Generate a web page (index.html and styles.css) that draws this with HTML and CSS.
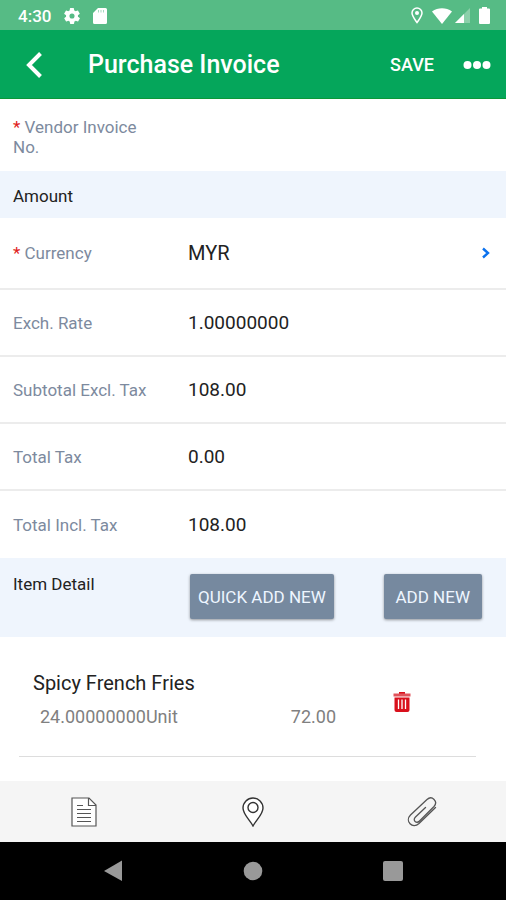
FILE: index.html
```html
<!DOCTYPE html>
<html lang="en">
<head>
<meta charset="utf-8">
<meta name="viewport" content="width=device-width, initial-scale=1">
<title>Purchase Invoice</title>
<link rel="stylesheet" href="styles.css">
</head>
<body>
<div class="status-bar">
  <span class="clock">4:30</span>
  <svg width="16" height="16" viewBox="2 2 20 20" aria-hidden="true"><path fill="#fff" d="M19.4 13a7.500 7.500 0 0 0 0-2l2.100-1.600a.5.5 0 0 0 .1-.6l-2-3.500a.5.5 0 0 0-.6-.2l-2.500 1a7.300 7.300 0 0 0-1.700-1l-.4-2.600a.5.5 0 0 0-.5-.4h-4a.5.5 0 0 0-.5.400L9.100 5.100a7.700 7.700 0 0 0-1.700 1l-2.500-1a.5.5 0 0 0-.6.200l-2 3.500a.5.5 0 0 0 .1.600L4.600 11a8 8 0 0 0 0 2l-2.100 1.600a.5.5 0 0 0-.1.600l2 3.500c.1.200.4.300.6.200l2.500-1a7.300 7.300 0 0 0 1.700 1l.4 2.600c0 .2.200.4.500.4h4c.2 0 .5-.2.500-.4l.4-2.600a7.700 7.700 0 0 0 1.700-1l2.500 1c.2.100.5 0 .6-.2l2-3.500a.5.5 0 0 0-.1-.6zM12 15.200a3.200 3.200 0 1 1 0-6.400 3.200 3.200 0 0 1 0 6.400z"/></svg>
  <svg width="14" height="16" viewBox="0 0 14 16" aria-hidden="true"><path fill="#fff" d="M5 0h7.500A1.500 1.500 0 0 1 14 1.500v13a1.500 1.500 0 0 1-1.500 1.500h-11A1.500 1.500 0 0 1 0 14.500V5z"/><path stroke="#a5dabf" stroke-width="1" d="M5.500 2v2.500M8 2v2.500M10.500 2v2.500"/></svg>
  <span class="status-right">
    <svg width="12" height="17" viewBox="0 0 12 17" aria-hidden="true"><path fill="none" stroke="#fff" stroke-width="1.500" d="M6 15.500C3.500 12 1 9 1 6a5 5 0 0 1 10 0c0 3-2.500 6-5 9.500z"/><circle cx="6" cy="6" r="2" fill="#fff"/></svg>
    <svg class="spaced" width="20" height="16" viewBox="0 0 20 16" aria-hidden="true"><path fill="#fff" d="M0 3.500C6-.7 14-.7 20 3.500L10 16z"/></svg>
    <svg width="15" height="15" viewBox="0 0 15 15" aria-hidden="true"><path fill="#8bd0aa" d="M15 0v15H0z"/><path fill="#fff" d="M9 6v9H0z"/></svg>
    <svg class="spaced" width="11" height="17" viewBox="0 0 11 17" aria-hidden="true"><path fill="#fff" d="M3 0h5v1.500h2a1 1 0 0 1 1 1V16a1 1 0 0 1-1 1H1a1 1 0 0 1-1-1V2.500a1 1 0 0 1 1-1h2z"/></svg>
  </span>
</div>

<header class="app-bar">
  <button class="back" type="button" aria-label="Back"><svg width="18" height="28" viewBox="0 0 18 28"><path fill="none" stroke="#fff" stroke-width="4" d="M16.500 2.500L5 14l11.500 11.500"/></svg></button>
  <h1 class="title">Purchase Invoice</h1>
  <button class="save" type="button">SAVE</button>
  <button type="button" aria-label="More"><svg width="28" height="10" viewBox="0 0 28 10"><g fill="#fff"><circle cx="4.500" cy="5" r="4"/><circle cx="14" cy="5" r="4"/><circle cx="23.500" cy="5" r="4"/></g></svg></button>
</header>

<main class="content">
  <form class="form">
    <div class="row row-first">
      <label for="vendor"><span class="required">*</span> Vendor Invoice No.</label>
      <input id="vendor" type="text">
    </div>
    <h2 class="section">Amount</h2>
    <div class="row">
      <label for="currency"><span class="required">*</span> Currency</label>
      <button id="currency" class="picker" type="button">MYR<svg width="8" height="12" viewBox="0 0 8 12" aria-hidden="true"><path fill="none" stroke="#0b72ee" stroke-width="2.400" d="M1 1.500L6 6 1 10.500"/></svg></button>
    </div>
    <div class="row">
      <label for="rate">Exch. Rate</label>
      <input id="rate" type="text" value="1.00000000">
    </div>
    <div class="row">
      <label for="subtotal">Subtotal Excl. Tax</label>
      <input id="subtotal" type="text" value="108.00">
    </div>
    <div class="row">
      <label for="tax">Total Tax</label>
      <input id="tax" type="text" value="0.00">
    </div>
    <div class="row row-last">
      <label for="total">Total Incl. Tax</label>
      <input id="total" type="text" value="108.00">
    </div>
  </form>

  <div class="detail-bar">
    <h2>Item Detail</h2>
    <button class="raised" type="button">QUICK ADD NEW</button>
    <button class="raised add" type="button">ADD NEW</button>
  </div>

  <ul class="items">
    <li class="item">
      <div>
        <h3 class="item-name">Spicy French Fries</h3>
        <p class="item-line"><span>24.00000000Unit</span><span>72.00</span></p>
      </div>
      <button class="delete" type="button" aria-label="Delete"><svg width="18" height="20" viewBox="0 0 18 20"><path fill="#d9101c" d="M6 0h6v2H6z"/><path fill="#e0525a" d="M.5 1.500h17v3H.5z"/><path fill="#d9101c" d="M1.500 5.500h15V18a2 2 0 0 1-2 2h-11a2 2 0 0 1-2-2z"/><path stroke="#fff" stroke-width="1.300" d="M5.500 7.500v9.500M9 7.500v9.500M12.500 7.500v9.500"/></svg></button>
    </li>
  </ul>
</main>

<nav class="tabs">
  <button class="tab" type="button" aria-label="Notes"><svg width="26" height="30" viewBox="0 0 26 30"><g fill="none" stroke="#555" stroke-width="1.200"><path fill="#fff" d="M1 1h17l7 7v21H1z"/><path d="M17.500 1v7.500H25"/><path d="M6 8.500h6M6 12.500h14M6 16.500h14M6 20.500h14M6 24.500h14"/></g></svg></button>
  <button class="tab" type="button" aria-label="Location"><svg width="22" height="30" viewBox="0 0 22 30"><g fill="none" stroke="#333" stroke-width="1.400"><path fill="#fff" d="M11 29C8 23 1 17.500 1 11a10 10 0 0 1 20 0c0 6.500-7 12-10 18z"/><circle cx="11" cy="10.500" r="5"/></g></svg></button>
  <button class="tab" type="button" aria-label="Attachments"><svg width="30" height="32" viewBox="0 0 30 32"><path fill="none" stroke="#555" stroke-width="1.300" stroke-linecap="round" stroke-linejoin="round" d="M18.500 11.500L8.500 21c-3.500 3.500 1 7 4 4L27 10.500c4.500-5-2-11.500-7-7L3.500 19c-6 6 2 14.500 8.500 8.500l16.500-16"/></svg></button>
</nav>

<div class="system-nav">
  <button type="button" aria-label="System back"><svg width="20" height="22" viewBox="0 0 20 22"><path fill="#999" d="M19 .5v20.500L1 11z"/></svg></button>
  <button type="button" aria-label="Home"><svg width="20" height="20" viewBox="0 0 20 20"><circle cx="10" cy="10" r="9.300" fill="#999"/></svg></button>
  <button type="button" aria-label="Recent apps"><svg width="20" height="20" viewBox="0 0 20 20"><rect width="20" height="20" rx="2" fill="#999"/></svg></button>
</div>
</body>
</html>
```
FILE: styles.css
```css
* {
  box-sizing: border-box;
}

body {
  margin: 0;
  min-height: 100vh;
  display: flex;
  flex-direction: column;
  background: #fff;
  color: #222;
  font-family: Roboto, "Liberation Sans", sans-serif;
  font-size: 17px;
  line-height: 20px;
}

button,
input {
  margin: 0;
  padding: 0;
  border: 0;
  background: none;
  color: inherit;
  font: inherit;
}

h1,
h2,
h3,
p,
ul {
  margin: 0;
  padding: 0;
  font-size: inherit;
  font-weight: 400;
  list-style: none;
}

svg {
  display: block;
  flex: none;
}

.status-bar {
  display: flex;
  align-items: center;
  gap: 13px;
  height: 30px;
  padding: 1px 16px 0 18px;
  background: #56bb85;
  color: #fff;
}

.clock {
  font-weight: 500;
}

.status-right {
  display: flex;
  align-items: center;
  gap: 3px;
  margin-left: auto;
}

.spaced {
  margin-left: 6px;
}

.app-bar {
  display: flex;
  align-items: center;
  height: 69px;
  padding: 2px 15px 0 24px;
  background: #05a65b;
  border-bottom: 1px solid #0b9838;
  color: #fff;
}

.back {
  margin-right: 46px;
}

.title {
  flex: 1;
  font-size: 25px;
  font-weight: 500;
  line-height: 32px;
}

.save {
  margin-right: 29px;
  font-size: 18px;
  font-weight: 500;
}

.content {
  flex: 1;
}

.row {
  display: grid;
  grid-template-columns: 150px 1fr;
  column-gap: 25px;
  align-items: center;
  min-height: 67px;
  padding: 0 13px;
  border-bottom: 2px solid #ececec;
}

.row label {
  color: #7d8a9e;
}

.row input {
  width: 100%;
  min-width: 0;
  font-size: 19px;
  line-height: 24px;
}

.row-first {
  min-height: 72px;
  padding-top: 4px;
  border: 0;
}

.row-last {
  border: 0;
}

.required {
  color: #e02020;
}

.section {
  padding: 15px 13px 12px;
  background: #eff5fd;
}

.section + .row {
  min-height: 72px;
}

.picker {
  display: flex;
  align-items: center;
  justify-content: space-between;
  padding-right: 3px;
  font-size: 20px;
  line-height: 24px;
}

.detail-bar {
  display: grid;
  grid-template-columns: 152px auto 1fr;
  column-gap: 25px;
  align-items: start;
  padding: 16px 24px 18px 13px;
  background: #eff5fd;
}

.raised {
  height: 45px;
  padding: 0 8px;
  border-radius: 2px;
  background: #76899f;
  box-shadow: 0 1px 3px rgba(0, 0, 0, .4);
  color: #eef6ff;
}

.add {
  justify-self: end;
  padding: 0 12px;
}

.items {
  padding: 32px 30px 24px 19px;
}

.item {
  display: grid;
  grid-template-columns: 303px 1fr;
  column-gap: 57px;
  align-items: center;
  padding: 0 0 29px 14px;
  border-bottom: 1px solid #ddd;
}

.item-name {
  font-size: 20px;
  line-height: 28px;
}

.item-line {
  display: flex;
  justify-content: space-between;
  padding: 10px 0 0 7px;
  color: #808080;
  font-size: 18px;
}

.delete {
  justify-self: start;
  padding-top: 8px;
}

.tabs {
  display: grid;
  grid-template-columns: repeat(3, 1fr);
  height: 61px;
  background: #f5f5f5;
}

.tab {
  display: flex;
  align-items: center;
  justify-content: center;
}

.system-nav {
  display: flex;
  align-items: center;
  justify-content: center;
  gap: 120px;
  height: 58px;
  background: #000;
}
```
